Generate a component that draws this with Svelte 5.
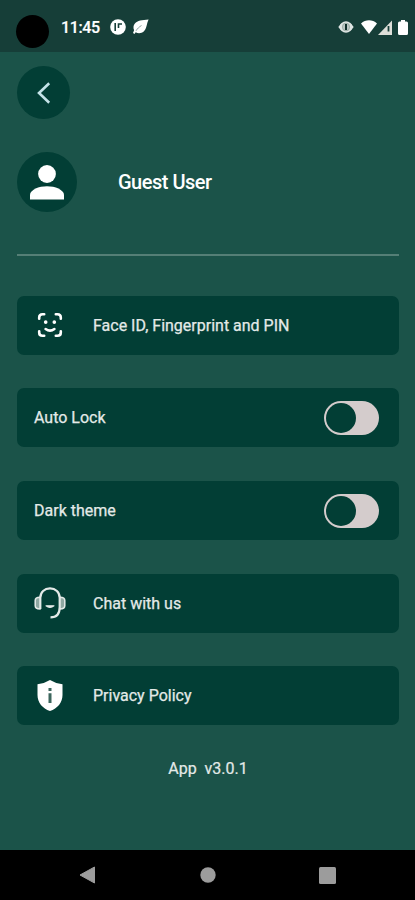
<script>
let autoLock = false
let darkTheme = false

const version = '3.0.1'
</script>

<style>
:global(body) {
    margin: 0;
    background: #1b5349;
}

.screen {
    --panel: #023e35;
    --track: #d4cccc;
    display: flex;
    flex-direction: column;
    height: 900px;
    background: #1b5349;
    color: #e4eae8;
    font-family: Roboto, sans-serif;
    overflow: hidden;
}

svg {
    display: block;
}

button {
    border: 0;
    padding: 0;
    background: none;
    color: inherit;
    font: inherit;
    text-align: left;
}

/* system status bar */
.status {
    display: flex;
    box-sizing: border-box;
    height: 52px;
    padding: 15px 7px 0 16px;
    background: #163e38;
    color: #fff;
}

.camera {
    width: 33px;
    height: 33px;
    margin-right: 12px;
    border-radius: 50%;
    background: #000;
}

.clock {
    width: 49px;
    font-size: 16px;
    font-weight: 500;
    letter-spacing: -0.35px;
    line-height: 25px;
    -webkit-text-stroke: 0.2px currentColor;
}

.notices,
.signals {
    display: flex;
    align-items: center;
    height: 24px;
}

.notices {
    gap: 7px;
}

.signals {
    margin-left: auto;
}

.signals .wifi {
    margin: 0 1px 0 7px;
}

.signals .battery {
    margin-left: 6px;
}

main {
    flex: 1;
    padding: 14px 16px 0 17px;
}

.back {
    display: grid;
    place-items: center;
    width: 53px;
    height: 53px;
    border-radius: 50%;
    background: var(--panel);
}

.profile {
    display: flex;
    align-items: center;
    gap: 41px;
    margin-top: 33px;
    padding-bottom: 41.5px;
    border-bottom: 2px solid #557f76;
}

.avatar {
    display: grid;
    place-items: center;
    width: 60px;
    height: 60px;
    border-radius: 50%;
    background: var(--panel);
}

.name {
    margin: 0;
    color: #fff;
    font-size: 20px;
    font-weight: 500;
    letter-spacing: -0.5px;
}

.cards {
    display: flex;
    flex-direction: column;
    gap: 33.7px;
    margin-top: 40.2px;
}

.card {
    display: flex;
    align-items: center;
    box-sizing: border-box;
    width: 100%;
    height: 59px;
    padding: 0 20px 0 17px;
    border-radius: 7px;
    background: var(--panel);
    font-size: 16px;
    font-weight: 400;
    -webkit-text-stroke: 0.25px currentColor;
}

.icon {
    display: grid;
    place-items: center;
    width: 32px;
    margin-right: 27px;
    color: #fff;
}

.toggle {
    display: flex;
    box-sizing: border-box;
    width: 55px;
    height: 34px;
    margin-left: auto;
    padding: 2px;
    border-radius: 17px;
    background: var(--track);
}

.toggle.on {
    justify-content: flex-end;
}

.knob {
    width: 30px;
    height: 30px;
    border-radius: 50%;
    background: var(--panel);
}

.version {
    margin: 34px 0 0;
    font-size: 16px;
    line-height: 20px;
    text-align: center;
    white-space: pre;
    -webkit-text-stroke: 0.2px currentColor;
}

/* system navigation bar */
.nav {
    display: flex;
    align-items: center;
    justify-content: space-between;
    box-sizing: border-box;
    height: 50px;
    padding: 0 79px;
    background: #000;
}
</style>

<div class="screen">
    <header class="status">
        <span class="camera"></span>
        <span class="clock">11:45</span>
        <div class="notices">
            <svg width="16" height="16" viewBox="0 0 16 16">
                <circle cx="8" cy="8" r="7.8" fill="#fff" />
                <path d="M5.200 4v8M8.500 9V5h3.500" fill="none" stroke="#163e38" stroke-width="1.600" />
            </svg>
            <svg width="16" height="16" viewBox="0 0 16 16">
                <path d="M15.600.5C9 1 4.400 1.600 1.900 4.500.2 6.500.1 9 1.100 11.200L0 14.100l1.500.8 1.200-1.600c2.600 1.400 5.900 1 8-.8C14 9.600 13.400 5 15.600.5z" fill="#fff" />
                <path d="M3 11.800C4.500 9.500 6 8 8.500 6.500" fill="none" stroke="#6f8884" stroke-width=".8" />
            </svg>
        </div>
        <div class="signals">
            <svg width="16" height="14" viewBox="0 0 16 14">
                <path d="M3.600 2.800L.3 7l3.300 4.200M12.400 2.800L15.700 7l-3.300 4.200" fill="#dfe5e3" />
                <ellipse cx="8" cy="7" rx="6.200" ry="5.700" fill="#dfe5e3" />
                <ellipse cx="8" cy="7" rx="3.700" ry="3.900" fill="#b9c5c2" stroke="#84988f" stroke-width=".6" />
                <path d="M8 4v6" stroke="#102f2a" stroke-width="2" />
            </svg>
            <svg class="wifi" width="16" height="14" viewBox="0 0 16 14">
                <path d="M0 3.500C4.500-.8 11.500-.8 16 3.500L8 14z" fill="#fff" />
            </svg>
            <svg width="14" height="15" viewBox="0 0 14 15">
                <path d="M14 .5V15H0z" fill="#dedfd9" />
                <path d="M10.500 6v5.500" stroke="#163e38" stroke-width="1.800" />
            </svg>
            <svg class="battery" width="10" height="15" viewBox="0 0 10 15">
                <path d="M3 0h4v1.500h1.500q1.500 0 1.500 1.500v10.500q0 1.500-1.500 1.500h-7Q0 15 0 13.500V3q0-1.500 1.500-1.500H3z" fill="#fff" />
            </svg>
        </div>
    </header>

    <main>
        <button class="back" aria-label="Back">
            <svg width="14" height="22" viewBox="0 0 14 22">
                <path d="M12.200 1.200L2 11l10.200 9.800" fill="none" stroke="#c4e3e8" stroke-width="2.600" />
            </svg>
        </button>

        <section class="profile">
            <div class="avatar">
                <svg width="34" height="35" viewBox="0 0 34 35">
                    <circle cx="17" cy="9" r="8.900" fill="#fff" />
                    <path d="M0 34.500V30C0 24.600 9 21.200 17 21.200S34 24.600 34 30v4.500z" fill="#fff" />
                </svg>
            </div>
            <h1 class="name">Guest User</h1>
        </section>

        <div class="cards">
            <button class="card">
                <span class="icon">
                    <svg width="26" height="26" viewBox="0 0 26 26" fill="none" stroke="currentColor" stroke-width="2.600" stroke-linecap="round">
                        <path d="M2.200 6.700V5.500Q2.200 2.200 5.500 2.200h1.700M18.800 2.200h1.700q3.300 0 3.300 3.300v1.200M2.200 19.300v1.200q0 3.300 3.300 3.300h1.700M18.800 23.800h1.700q3.300 0 3.300-3.300v-1.200" />
                        <path d="M8.600 17q4.400 3.200 8.800 0" />
                        <path d="M8.700 10v.3M17.300 10v.3" stroke-width="3.600" />
                    </svg>
                </span>
                <span>Face ID, Fingerprint and PIN</span>
            </button>

            <div class="card">
                <span>Auto Lock</span>
                <button class="toggle" class:on={autoLock} role="switch" aria-checked={autoLock} aria-label="Auto Lock" on:click={() => (autoLock = !autoLock)}>
                    <span class="knob"></span>
                </button>
            </div>

            <div class="card">
                <span>Dark theme</span>
                <button class="toggle" class:on={darkTheme} role="switch" aria-checked={darkTheme} aria-label="Dark theme" on:click={() => (darkTheme = !darkTheme)}>
                    <span class="knob"></span>
                </button>
            </div>

            <button class="card">
                <span class="icon">
                    <svg width="32" height="32" viewBox="0 0 32 32" fill="none" stroke="#e4eae8" stroke-width="2.200">
                        <path d="M6.300 22V10.800C6.300 5.200 10.500 1.300 16 1.300s9.700 3.900 9.700 9.500V20c0 6.500-3 10.400-9.200 10.400" />
                        <path d="M6 10.300c-3 0-4.800 1.200-4.800 3.200v5.200c0 2 1.800 3.200 4.800 3.200zM26 10.300c3 0 4.800 1.200 4.800 3.200v5.200c0 2-1.800 3.200-4.800 3.200z" fill="#8fa8a2" stroke-width="1.500" />
                        <path d="M12 18.800h8q-4 3.200-8 0z" fill="#e4eae8" stroke-width="1.200" stroke-linejoin="round" />
                    </svg>
                </span>
                <span>Chat with us</span>
            </button>

            <button class="card">
                <span class="icon">
                    <svg width="26" height="31" viewBox="0 0 26 31">
                        <path d="M13 0Q18.500 3.500 25.500 4.300V15c0 7.500-5 13.500-12.500 16C5.500 28.500.5 22.500.5 15V4.300Q7.500 3.500 13 0z" fill="#fff" />
                        <path d="M13 8v3M13 13.200V23" stroke="#3c665d" stroke-width="3" />
                    </svg>
                </span>
                <span>Privacy Policy</span>
            </button>
        </div>

        <p class="version">{`App  v${version}`}</p>
    </main>

    <footer class="nav">
        <svg width="17" height="18" viewBox="0 0 17 18">
            <path d="M15.500 1v16L1 9z" fill="#9c9c9c" stroke="#9c9c9c" stroke-linejoin="round" />
        </svg>
        <svg width="16" height="16" viewBox="0 0 16 16">
            <circle cx="8" cy="8" r="7.700" fill="#9c9c9c" />
        </svg>
        <svg width="17" height="17" viewBox="0 0 17 17">
            <rect width="17" height="17" rx="1.500" fill="#9c9c9c" />
        </svg>
    </footer>
</div>
